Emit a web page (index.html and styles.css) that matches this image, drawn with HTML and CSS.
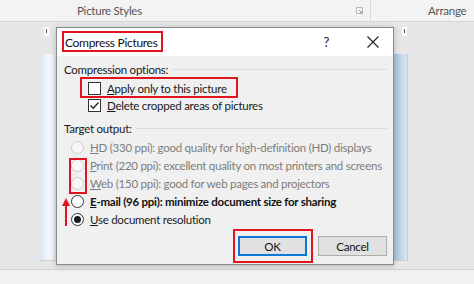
FILE: index.html
```html
<!DOCTYPE html>
<html>
<head>
<meta charset="utf-8">
<link rel="stylesheet" href="styles.css">
</head>
<body>
<div class="screen">
  <div class="ribbon">
    <div class="grp-styles">
      <span class="grp-label">Picture Styles</span>
      <svg class="launcher" width="7" height="7" viewBox="0 0 7 7"><path d="M0.5 0.5H6.5V6.5H0.5Z" fill="none" stroke="#b8b8b8"/><path d="M3 3L6 6M4 6H6V4" fill="none" stroke="#9a9a9a"/></svg>
    </div>
    <div class="grp-sep"></div>
    <div class="grp-arrange"><span class="grp-label">Arrange</span></div>
  </div>
  <div class="workspace">
    <div class="ruler">
      <span class="mark"></span>
      <span class="mark"></span>
    </div>
    <div class="page"></div>
  </div>
  <div class="status"></div>

  <div class="dialog">
    <div class="titlebar">
      <span class="title">Compress Pictures</span>
      <span class="help">?</span>
      <svg class="close" width="12" height="12" viewBox="0 0 12 12"><path d="M0.5 0.5L11.5 11.5M11.5 0.5L0.5 11.5" stroke="#222" stroke-width="1.1"/></svg>
    </div>
    <div class="body">
      <div class="section"><span>Compression options:</span><span class="rule"></span></div>
      <div class="crow first"><span class="cb"></span><span><u>A</u>pply only to this picture</span></div>
      <div class="crow"><span class="cb checked"><svg width="11" height="11" viewBox="0 0 11 11"><path d="M1.5 5.5L4.2 8.3L9.5 2.5" fill="none" stroke="#222" stroke-width="1.3"/></svg></span><span><u>D</u>elete cropped areas of pictures</span></div>
      <div class="section sec2"><span>Target output:</span><span class="rule"></span></div>
      <div class="rrow dis"><span class="rb"></span><span><u>H</u>D (330 ppi): good quality for high-definition (HD) displays</span></div>
      <div class="rrow dis"><span class="rb"></span><span><u>P</u>rint (220 ppi): excellent quality on most printers and screens</span></div>
      <div class="rrow dis"><span class="rb"></span><span><u>W</u>eb (150 ppi): good for web pages and projectors</span></div>
      <div class="rrow bold"><span class="rb"></span><span><u>E</u>-mail (96 ppi): minimize document size for sharing</span></div>
      <div class="rrow"><span class="rb on"></span><span><u>U</u>se document resolution</span></div>
      <div class="buttons">
        <span class="btn ok">OK</span>
        <span class="btn">Cancel</span>
      </div>
    </div>
    <div class="mark-red m-title"></div>
    <div class="mark-red m-apply"></div>
    <div class="mark-red m-radios"></div>
    <div class="mark-red m-ok"></div>
    <svg class="arrow" width="10" height="30" viewBox="0 0 10 30"><path d="M1 9L5 1L9 9Z" fill="#e0141e"/><rect x="4" y="8" width="2" height="21" fill="#e0141e"/></svg>
  </div>
</div>
</body>
</html>
```
FILE: styles.css
```css
* { box-sizing: border-box; }
html, body { margin: 0; padding: 0; }
body {
  width: 474px;
  height: 284px;
  overflow: hidden;
  font-family: "Lato", "Noto Sans", sans-serif;
  font-size: 11.5px;
  letter-spacing: -0.25px;
  color: #1a1a1a;
  background: #e6e6e6;
}
.screen {
  position: relative;
  width: 474px;
  height: 284px;
  display: flex;
  flex-direction: column;
}
.ribbon {
  height: 22px;
  flex: none;
  background: #f3f3f3;
  border-bottom: 1px solid #d6d6d6;
  display: flex;
  align-items: stretch;
}
.grp-styles {
  width: 370px;
  display: flex;
  align-items: center;
  padding-left: 77px;
}
.grp-label { color: #555; font-size: 11.5px; line-height: 1; white-space: nowrap; }
.launcher { margin-left: auto; margin-right: 7px; }
.grp-sep { width: 1px; background: #dcdcdc; }
.grp-arrange {
  flex: 1;
  display: flex;
  align-items: center;
  padding-left: 57px;
}
.workspace {
  flex: none;
  height: 248px;
  display: flex;
  flex-direction: column;
  background: #e7e7e7;
  border-bottom: 1px solid #d2d2d2;
}
.ruler {
  height: 32px;
  padding: 5px 0 0 44px;
  display: flex;
  gap: 353px;
}
.mark {
  width: 5px;
  height: 9px;
  background: #fdfdfd;
  position: relative;
}
.mark::after {
  content: "";
  position: absolute;
  left: 2px;
  top: 2px;
  width: 1px;
  height: 4px;
  background: #555;
}
.page {
  margin-left: 40px;
  width: 368px;
  height: 207px;
  background: linear-gradient(to right, #d8e6f3 0px, #f2f6fa 8px, #f2f6fa 12px, #d5e3f0 16px, #d5e3f0 352px, #a9c3dc 355px, #c6d8ea 362px, #dbe6f1 367px);
  border-right: 1px solid #c9c9c9;
  border-bottom: 1px solid #cfcfcf;
}
.status {
  flex: 1;
  background: #f1f1f1;
}

.dialog {
  position: absolute;
  left: 56px;
  top: 27px;
  width: 338px;
  height: 238px;
  border: 1px solid #8a8a8a;
  box-shadow: 0 1px 6px rgba(0,0,0,0.22);
  background: #f0f0f0;
  display: flex;
  flex-direction: column;
  white-space: nowrap;
}
.titlebar {
  height: 28px;
  flex: none;
  background: #fff;
  display: flex;
  align-items: center;
  padding-left: 8px;
}
.title { font-size: 12px; letter-spacing: -0.3px; color: #111; }
.help { margin-left: auto; font-size: 13px; color: #222; margin-right: 38px; }
.close { margin-right: 14px; }
.body {
  flex: 1;
  padding: 4px 6px 0 7px;
  display: flex;
  flex-direction: column;
}
.section {
  height: 18px;
  flex: none;
  display: flex;
  align-items: center;
  gap: 4px;
}
.section .rule { flex: 1; height: 1px; background: #dcdcdc; }
.sec2 { margin-top: 5px; }
.crow {
  height: 17px;
  flex: none;
  display: flex;
  align-items: center;
  padding-left: 24px;
  gap: 6px;
}
.crow.first { margin-top: 2px; }
.cb {
  width: 13px;
  height: 13px;
  border: 1px solid #333;
  background: #fff;
  display: flex;
  align-items: center;
  justify-content: center;
  flex: none;
}
.cb svg { display: block; }
.rrow {
  height: 18px;
  flex: none;
  display: flex;
  align-items: center;
  padding-left: 7px;
  gap: 6px;
}
.section + .rrow { margin-top: 1px; }
.rb {
  width: 13px;
  height: 13px;
  border-radius: 50%;
  border: 1px solid #333;
  background: #fff;
  flex: none;
  display: flex;
  align-items: center;
  justify-content: center;
}
.rb.on::after {
  content: "";
  width: 7px;
  height: 7px;
  border-radius: 50%;
  background: #1a1a1a;
}
.dis { color: #7d7d7d; }
.dis .rb { border-color: #cdcdcd; background: #f7f7f7; }
.bold { font-weight: 700; color: #111; }
.buttons {
  margin-top: 8px;
  display: flex;
  justify-content: flex-end;
  gap: 11px;
}
.btn {
  width: 69px;
  height: 20px;
  background: #e1e1e1;
  border: 1px solid #adadad;
  display: flex;
  align-items: center;
  justify-content: center;
  color: #111;
}
.btn.ok { border: 2px solid #0a78d4; }

.mark-red {
  position: absolute;
  border: 2px solid #e0141e;
}
.m-title { left: 5px; top: 3px; width: 101px; height: 21px; }
.m-apply { left: 23px; top: 49px; width: 158px; height: 21px; }
.m-radios { left: 12px; top: 130px; width: 18px; height: 36px; }
.m-ok { left: 176px; top: 201px; width: 80px; height: 34px; }
.arrow { position: absolute; left: 4px; top: 169px; }
```
